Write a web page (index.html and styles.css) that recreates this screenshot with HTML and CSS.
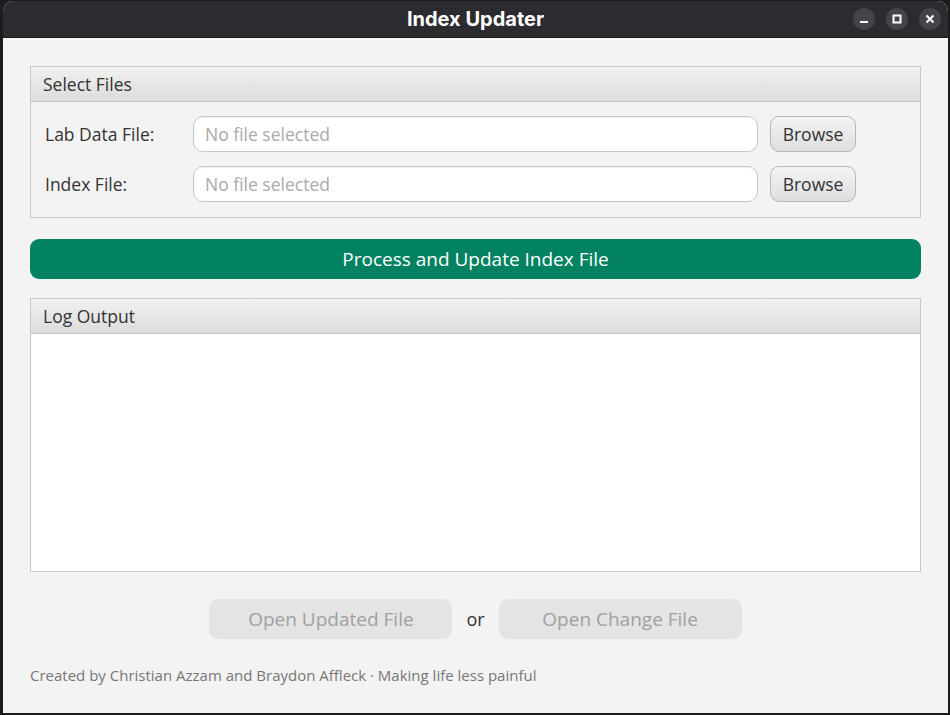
FILE: index.html
```html
<!DOCTYPE html>
<html>
<head>
<meta charset="utf-8">
<link rel="stylesheet" href="styles.css">
</head>
<body>
<div class="window">
  <div class="titlebar">
    <div class="title">Index Updater</div>
    <div class="controls">
      <span class="ctl"><svg width="22" height="22" viewBox="0 0 22 22"><rect x="7" y="13" width="8" height="2" fill="#fff"/></svg></span>
      <span class="ctl"><svg width="22" height="22" viewBox="0 0 22 22"><rect x="7.5" y="7.5" width="7" height="7" fill="none" stroke="#fff" stroke-width="2"/></svg></span>
      <span class="ctl"><svg width="22" height="22" viewBox="0 0 22 22"><path d="M7.5 7.5 L14.5 14.5 M14.5 7.5 L7.5 14.5" stroke="#fff" stroke-width="2"/></svg></span>
    </div>
  </div>
  <div class="content">
    <div class="panel">
      <div class="panel-head">Select Files</div>
      <div class="panel-body">
        <div class="row">
          <span class="label">Lab Data File:</span>
          <div class="field">No file selected</div>
          <div class="browse">Browse</div>
        </div>
        <div class="row">
          <span class="label">Index File:</span>
          <div class="field">No file selected</div>
          <div class="browse">Browse</div>
        </div>
      </div>
    </div>
    <div class="process">Process and Update Index File</div>
    <div class="panel log">
      <div class="panel-head">Log Output</div>
      <div class="log-body"></div>
    </div>
    <div class="actions">
      <div class="open-btn">Open Updated File</div>
      <span class="or">or</span>
      <div class="open-btn">Open Change File</div>
    </div>
    <div class="footer">Created by Christian Azzam and Braydon Affleck · Making life less painful</div>
  </div>
</div>
</body>
</html>
```
FILE: styles.css
```css
html, body {
  margin: 0;
  padding: 0;
  background: #1c1c1f;
  width: 950px;
  height: 715px;
  overflow: hidden;
}
.window {
  margin: 1px 0 0 3px;
  width: 945px;
  height: 712px;
  background: #f3f3f3;
  border-radius: 10px 10px 0 0;
  overflow: hidden;
  display: flex;
  flex-direction: column;
}
.titlebar {
  height: 36px;
  background: #2c2b30;
  border-bottom: 1px solid #1a1a1c;
  display: flex;
  align-items: center;
  justify-content: center;
  position: relative;
  flex: 0 0 auto;
}
.title {
  font-family: Inter, "Liberation Sans", sans-serif;
  font-weight: 700;
  font-size: 20px;
  color: #ffffff;
}
.controls {
  position: absolute;
  right: 7px;
  top: 7px;
  display: flex;
  gap: 11px;
}
.ctl {
  width: 22px;
  height: 22px;
  border-radius: 50%;
  background: #46444b;
  display: block;
}
.ctl svg { display: block; }
.content {
  padding: 28px 27px 0 27px;
  display: flex;
  flex-direction: column;
  font-family: "Open Sans", "Noto Sans", sans-serif;
  color: #333;
}
.panel {
  border: 1px solid #c8c8c8;
  background: #f3f3f3;
}
.panel-head {
  height: 34px;
  border-bottom: 1px solid #c4c4c4;
  background: linear-gradient(#f1f1f1, #dcdcdc);
  font-size: 17.5px;
  line-height: 34px;
  padding-left: 12px;
  color: #333;
}
.panel-body {
  padding: 14px 0 15px 14px;
  display: flex;
  flex-direction: column;
  gap: 14px;
}
.row {
  display: flex;
  align-items: center;
}
.label {
  width: 148px;
  font-size: 17.5px;
  color: #333;
}
.field {
  width: 552px;
  height: 34px;
  border: 1px solid #c6c6c6;
  border-radius: 10px;
  background: #fff;
  font-size: 17.5px;
  color: #aaaaaa;
  line-height: 34px;
  padding-left: 11px;
  box-shadow: inset 0 1px 1px rgba(0,0,0,0.06);
}
.browse {
  margin-left: 12px;
  width: 84px;
  height: 34px;
  border: 1px solid #b6b6b6;
  border-radius: 9px;
  background: linear-gradient(#f4f4f4, #dedede);
  font-size: 17.5px;
  line-height: 34px;
  text-align: center;
  color: #333;
}
.process {
  margin-top: 21px;
  height: 40px;
  background: #028260;
  border-radius: 9px;
  color: #fff;
  font-size: 19px;
  line-height: 40px;
  text-align: center;
}
.log {
  margin-top: 19px;
}
.log-body {
  height: 237px;
  background: #fff;
}
.actions {
  margin-top: 27px;
  display: flex;
  justify-content: center;
  align-items: center;
  gap: 14px;
}
.open-btn {
  width: 243px;
  height: 40px;
  border-radius: 9px;
  background: #e4e4e4;
  color: #a0a0a0;
  font-size: 19px;
  line-height: 40px;
  text-align: center;
}
.or {
  font-size: 18px;
  color: #333;
}
.footer {
  margin-top: 26px;
  font-size: 15px;
  color: #777;
}
```
